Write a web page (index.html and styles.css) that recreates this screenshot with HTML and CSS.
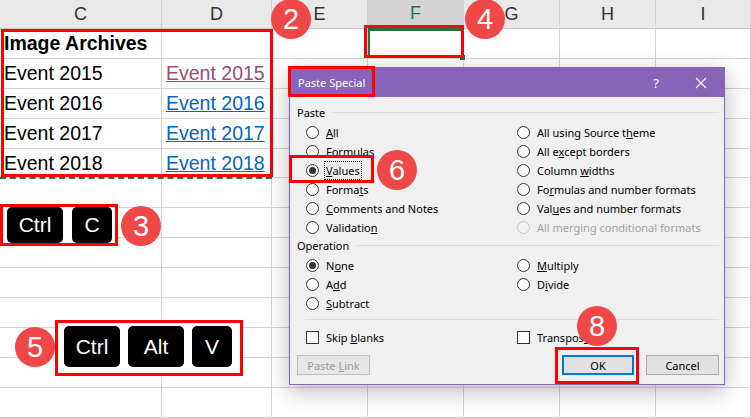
FILE: index.html
```html
<!DOCTYPE html>
<html lang="en">

<head>
    <meta charset="UTF-8">
    <meta name="viewport" content="width=device-width, initial-scale=1.0">
    <title>Paste Special - Values</title>
    <link rel="stylesheet" href="styles.css">
</head>

<body>
    <div class="sheet">
        <div class="cell head">C</div><div class="cell head">D</div><div class="cell head">E</div><div class="cell head active">F</div><div class="cell head">G</div><div class="cell head">H</div><div class="cell head">I</div>

        <div class="cell"><b>Image Archives</b></div><div class="cell"></div><div class="cell"></div><div class="cell sel"></div><div class="cell"></div><div class="cell"></div><div class="cell"></div>
        <div class="cell">Event 2015</div><div class="cell"><a class="visited">Event 2015</a></div><div class="cell"></div><div class="cell"></div><div class="cell"></div><div class="cell"></div><div class="cell"></div>
        <div class="cell">Event 2016</div><div class="cell"><a>Event 2016</a></div><div class="cell"></div><div class="cell"></div><div class="cell"></div><div class="cell"></div><div class="cell"></div>
        <div class="cell">Event 2017</div><div class="cell"><a>Event 2017</a></div><div class="cell"></div><div class="cell"></div><div class="cell"></div><div class="cell"></div><div class="cell"></div>
        <div class="cell">Event 2018</div><div class="cell"><a>Event 2018</a></div><div class="cell"></div><div class="cell"></div><div class="cell"></div><div class="cell"></div><div class="cell"></div>

        <div class="cell"></div><div class="cell"></div><div class="cell"></div><div class="cell"></div><div class="cell"></div><div class="cell"></div><div class="cell"></div>
        <div class="cell"></div><div class="cell"></div><div class="cell"></div><div class="cell"></div><div class="cell"></div><div class="cell"></div><div class="cell"></div>
        <div class="cell"></div><div class="cell"></div><div class="cell"></div><div class="cell"></div><div class="cell"></div><div class="cell"></div><div class="cell"></div>
        <div class="cell"></div><div class="cell"></div><div class="cell"></div><div class="cell"></div><div class="cell"></div><div class="cell"></div><div class="cell"></div>
        <div class="cell"></div><div class="cell"></div><div class="cell"></div><div class="cell"></div><div class="cell"></div><div class="cell"></div><div class="cell"></div>
        <div class="cell"></div><div class="cell"></div><div class="cell"></div><div class="cell"></div><div class="cell"></div><div class="cell"></div><div class="cell"></div>
        <div class="cell"></div><div class="cell"></div><div class="cell"></div><div class="cell"></div><div class="cell"></div><div class="cell"></div><div class="cell"></div>
        <div class="cell"></div><div class="cell"></div><div class="cell"></div><div class="cell"></div><div class="cell"></div><div class="cell"></div><div class="cell"></div>
    </div>

    <!-- copy marquee + highlight boxes -->
    <div class="marquee"></div>
    <div class="hl hl-range"></div>
    <div class="hl hl-target"></div>

    <div class="keys keys-copy">
        <span class="key">Ctrl</span>
        <span class="key key-c">C</span>
    </div>
    <div class="keys keys-paste">
        <span class="key">Ctrl</span>
        <span class="key">Alt</span>
        <span class="key key-v">V</span>
    </div>

    <div class="dialog">
        <div class="dlg-title">
            <span>Paste Special</span>
            <span class="dlg-help">?</span>
            <span class="dlg-close">
                <svg width="12" height="12" viewBox="0 0 12 12"><path d="M1 1 L11 11 M11 1 L1 11" stroke="#fff" stroke-width="1.1" fill="none"/></svg>
            </span>
        </div>
        <div class="dlg-body">
            <div class="group-head">Paste</div>
            <div class="opts">
                <div class="opt"><span class="radio"></span><span><u>A</u>ll</span></div>
                <div class="opt"><span class="radio"></span><span>All using Source t<u>h</u>eme</span></div>
                <div class="opt"><span class="radio"></span><span><u>F</u>ormulas</span></div>
                <div class="opt"><span class="radio"></span><span>All e<u>x</u>cept borders</span></div>
                <div class="opt"><span class="radio on"></span><span class="focus"><u>V</u>alues</span></div>
                <div class="opt"><span class="radio"></span><span>Column <u>w</u>idths</span></div>
                <div class="opt"><span class="radio"></span><span>Forma<u>t</u>s</span></div>
                <div class="opt"><span class="radio"></span><span>Fo<u>r</u>mulas and number formats</span></div>
                <div class="opt"><span class="radio"></span><span><u>C</u>omments and Notes</span></div>
                <div class="opt"><span class="radio"></span><span>Val<u>u</u>es and number formats</span></div>
                <div class="opt"><span class="radio"></span><span>Validatio<u>n</u></span></div>
                <div class="opt disabled"><span class="radio"></span><span>All mer<u>g</u>ing conditional formats</span></div>
            </div>
            <div class="group-head">Operation</div>
            <div class="opts">
                <div class="opt"><span class="radio on"></span><span>N<u>o</u>ne</span></div>
                <div class="opt"><span class="radio"></span><span><u>M</u>ultiply</span></div>
                <div class="opt"><span class="radio"></span><span>A<u>d</u>d</span></div>
                <div class="opt"><span class="radio"></span><span>D<u>i</u>vide</span></div>
                <div class="opt"><span class="radio"></span><span><u>S</u>ubtract</span></div>
            </div>
            <div class="sep"></div>
            <div class="opts checks">
                <div class="opt"><span class="check"></span><span>Skip <u>b</u>lanks</span></div>
                <div class="opt"><span class="check"></span><span>Transpos<u>e</u></span></div>
            </div>
            <div class="btns">
                <button class="btn" disabled>Paste <u>L</u>ink</button>
                <button class="btn ok">OK</button>
                <button class="btn">Cancel</button>
            </div>
        </div>
    </div>

    <div class="hl hl-title"></div>
    <div class="hl hl-values"></div>
    <div class="hl hl-ok"></div>

    <span class="badge b2">2</span>
    <span class="badge b3">3</span>
    <span class="badge b4">4</span>
    <span class="badge b5">5</span>
    <span class="badge b6">6</span>
    <span class="badge b8">8</span>
</body>

</html>
```

FILE: styles.css
```css
body {
    margin: 0;
    width: 751px;
    height: 418px;
    overflow: hidden;
    position: relative;
    background-color: #fff;
    font-family: "Liberation Sans", Arial, sans-serif;
}

/* worksheet */
.sheet {
    display: grid;
    grid-template-columns: 162px 110px 96px 96px 96px 96px 95px;
    grid-template-rows: 29px repeat(4, 30px) 29px repeat(8, 30px);
}
.cell {
    display: flex;
    align-items: center;
    padding: 0 4px;
    box-sizing: border-box;
    border-right: 1px solid #d4d4d4;
    border-bottom: 1px solid #d4d4d4;
    font-size: 19.5px;
    color: #000;
    white-space: nowrap;
}
.cell.head {
    justify-content: center;
    background-color: #e9e9e9;
    border-right-color: #d0d0d0;
    border-bottom-color: #c8c8c8;
    font-size: 18px;
    color: #333;
}
.cell.head.active {
    background-color: #d3d3d3;
    color: #217346;
    border-bottom: 2px solid #217346;
}
.cell.sel {
    position: relative;
    box-shadow: inset 0 0 0 2px #217346;
}
.cell.sel::after {
    content: "";
    position: absolute;
    right: -3px;
    bottom: -3px;
    width: 5px;
    height: 5px;
    background: #217346;
    border: 1px solid #fff;
}
.cell a {
    color: #0563c1;
    text-decoration: underline;
}
.cell a.visited {
    color: #954f72;
}

.marquee {
    position: absolute;
    left: 0;
    top: 177px;
    width: 272px;
    border-top: 2px dashed #217346;
}

/* red highlight boxes */
.hl {
    position: absolute;
    border: 3px solid #ff0000;
    box-sizing: border-box;
}
.hl-range { left: 1px; top: 29px; width: 272px; height: 148px; }
.hl-target { left: 364px; top: 25px; width: 100px; height: 33px; }
.hl-title { left: 288px; top: 66px; width: 87px; height: 31px; }
.hl-values { left: 289px; top: 155px; width: 85px; height: 28px; }
.hl-ok { left: 555px; top: 347px; width: 84px; height: 37px; }

/* keyboard shortcut images */
.keys {
    position: absolute;
    display: flex;
    background-color: #fff;
    border: 3px solid #ff0000;
    box-sizing: border-box;
}
.keys-copy {
    left: 0;
    top: 204px;
    width: 118px;
    height: 42px;
    padding-left: 4px;
    gap: 9px;
}
.keys-paste {
    left: 55px;
    top: 320px;
    width: 188px;
    height: 56px;
    padding: 3px 0 6px 6px;
    gap: 8px;
}
.key {
    width: 56px;
    display: flex;
    align-items: center;
    justify-content: center;
    background-color: #000;
    color: #fff;
    border-radius: 5px;
    font-size: 21px;
}
.key-c { width: 40px; }
.key-v { width: 40px; }

/* numbered step badges */
.badge {
    position: absolute;
    width: 40px;
    height: 40px;
    border-radius: 50%;
    background-color: #f04848;
    color: #fff;
    font-size: 29px;
    line-height: 1;
    display: flex;
    align-items: center;
    justify-content: center;
}
.b2 { left: 271px; top: -1px; }
.b3 { left: 121px; top: 206px; }
.b4 { left: 465px; top: -1px; }
.b5 { left: 15px; top: 327px; }
.b6 { left: 377px; top: 150px; }
.b8 { left: 577px; top: 306px; }

/* Paste Special dialog */
.dialog {
    position: absolute;
    left: 289px;
    top: 67px;
    width: 436px;
    box-sizing: border-box;
    border: 1px solid #8764b8;
    background-color: #f0f0f0;
    box-shadow: 0 6px 22px rgba(0,0,0,0.28);
    font-family: "Noto Sans", "Open Sans", sans-serif;
    font-size: 11px;
    color: #000;
}
.dlg-title {
    height: 29px;
    display: flex;
    align-items: center;
    padding-left: 8px;
    background-color: #8764b8;
    color: #fff;
}
.dlg-help {
    margin-left: auto;
    width: 20px;
    margin-right: 12px;
    text-align: center;
    font-size: 13px;
}
.dlg-close {
    width: 46px;
    display: flex;
    justify-content: center;
}
.dlg-body {
    padding: 7px 5px 9px 7px;
}
.group-head {
    display: flex;
    align-items: center;
    height: 16px;
}
.group-head::after {
    content: "";
    flex: 1;
    height: 1px;
    margin-left: 8px;
    background-color: #dcdcdc;
}
.opts {
    display: grid;
    grid-template-columns: 211px 1fr;
    grid-auto-rows: 19px;
    padding-left: 9px;
    margin-top: 3px;
}
.opt {
    display: flex;
    align-items: center;
    gap: 7px;
    white-space: nowrap;
}
.opt.disabled {
    color: #a0a0a0;
}
.radio, .check {
    width: 13px;
    height: 13px;
    box-sizing: border-box;
    border: 1px solid #333;
    background-color: #fff;
    border-radius: 50%;
    display: flex;
    align-items: center;
    justify-content: center;
}
.check {
    border-radius: 0;
}
.radio.on::after {
    content: "";
    width: 7px;
    height: 7px;
    border-radius: 50%;
    background-color: #333;
}
.opt.disabled .radio {
    border-color: #c4c4c4;
    background-color: #f0f0f0;
}
.focus {
    outline: 1px dotted #000;
    outline-offset: 1px;
}
.sep {
    height: 1px;
    margin: 6px 0 0 8px;
    background-color: #dcdcdc;
}
.checks {
    margin-top: 8px;
}
.btns {
    display: flex;
    gap: 12px;
    margin-top: 8px;
}
.btn {
    width: 73px;
    height: 20px;
    padding: 0;
    box-sizing: border-box;
    border: 1px solid #adadad;
    background-color: #e1e1e1;
    font-family: inherit;
    font-size: 11px;
    color: #000;
}
.btn:disabled {
    border-color: #bfbfbf;
    background-color: #e6e6e6;
    color: #9a9a9a;
}
.btn.ok {
    margin-left: auto;
    width: 72px;
    border: 2px solid #0078d7;
}
```
